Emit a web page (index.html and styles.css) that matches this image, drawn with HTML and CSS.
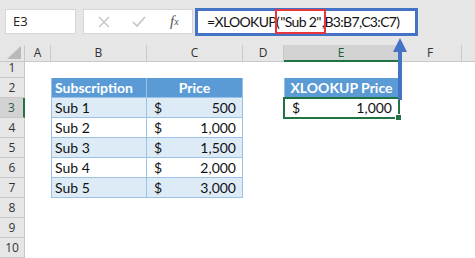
FILE: index.html
```html
<!DOCTYPE html>
<html lang="en">
<head>
    <meta charset="UTF-8">
    <title>XLOOKUP Example</title>
    <link rel="stylesheet" href="styles.css">
</head>
<body>
    <div class="toolbar">
        <div class="name-box">E3</div>
        <div class="fx-buttons">
            <span class="fx-btn">
                <svg width="12" height="12" viewBox="0 0 12 12"><path d="M1 1 L11 11 M11 1 L1 11" stroke="#c4c4c4" stroke-width="1.4" fill="none"/></svg>
            </span>
            <span class="fx-btn">
                <svg width="14" height="12" viewBox="0 0 14 12"><path d="M1 6 L5 10 L13 1" stroke="#c4c4c4" stroke-width="1.6" fill="none"/></svg>
            </span>
            <span class="fx-btn fx-label"><i>f</i><sub>x</sub></span>
        </div>
        <div class="formula-bar">=XLOOKUP(<span class="highlight">"Sub 2"</span>,B3:B7,C3:C7)</div>
    </div>

    <div class="sheet">
        <!-- column headers -->
        <div class="corner"><span class="corner-tri"></span></div>
        <div class="col-hdr">A</div>
        <div class="col-hdr">B</div>
        <div class="col-hdr">C</div>
        <div class="col-hdr">D</div>
        <div class="col-hdr active">E</div>
        <div class="col-hdr">F</div>
        <div class="col-hdr last"></div>

        <!-- row 1 -->
        <div class="row-hdr short">1</div>
        <div class="fill-row"></div>

        <!-- row 2 -->
        <div class="row-hdr">2</div>
        <div></div>
        <div class="cell tbl-head first">Subscription</div>
        <div class="cell tbl-head center">Price</div>
        <div></div>
        <div class="cell tbl-head center first">XLOOKUP Price</div>
        <div class="fill-2"></div>

        <!-- row 3 -->
        <div class="row-hdr active">3</div>
        <div></div>
        <div class="cell band first">Sub 1</div>
        <div class="cell band money"><span>$</span><span>500</span></div>
        <div></div>
        <div class="cell money selected"><span>$</span><span>1,000</span></div>
        <div class="fill-2"></div>

        <!-- row 4 -->
        <div class="row-hdr">4</div>
        <div></div>
        <div class="cell first">Sub 2</div>
        <div class="cell money"><span>$</span><span>1,000</span></div>
        <div class="fill-rest"></div>

        <!-- row 5 -->
        <div class="row-hdr">5</div>
        <div></div>
        <div class="cell band first">Sub 3</div>
        <div class="cell band money"><span>$</span><span>1,500</span></div>
        <div class="fill-rest"></div>

        <!-- row 6 -->
        <div class="row-hdr">6</div>
        <div></div>
        <div class="cell first">Sub 4</div>
        <div class="cell money"><span>$</span><span>2,000</span></div>
        <div class="fill-rest"></div>

        <!-- row 7 -->
        <div class="row-hdr">7</div>
        <div></div>
        <div class="cell band first">Sub 5</div>
        <div class="cell band money"><span>$</span><span>3,000</span></div>
        <div class="fill-rest"></div>

        <div class="row-hdr">8</div>
        <div class="fill-row"></div>
        <div class="row-hdr">9</div>
        <div class="fill-row"></div>
        <div class="row-hdr">10</div>
        <div class="fill-row"></div>
    </div>

    <!-- annotation arrow from E3 up to the formula -->
    <div class="arrow">
        <span class="arrow-head"></span>
        <span class="arrow-shaft"></span>
    </div>
</body>
</html>
```

FILE: styles.css
```css
:root {
    --chrome: #e6e6e6;
    --hdr-line: #c8c8c8;
    --xl-green: #217346;
    --tbl-blue: #5b9bd5;
    --tbl-band: #ddebf7;
    --tbl-line: #9bc2e6;
    --annot-blue: #4472c4;
}

body {
    margin: 0;
    width: 475px;
    height: 258px;
    overflow: hidden;
    font-family: Lato, "Open Sans", sans-serif;
    background-color: #fff;
    position: relative;
}

/* formula bar strip */
.toolbar {
    display: flex;
    align-items: flex-start;
    height: 45px;
    padding-top: 9px;
    padding-left: 5px;
    box-sizing: border-box;
    background-color: var(--chrome);
}
.name-box {
    width: 71px;
    height: 25px;
    box-sizing: border-box;
    background-color: #fff;
    border: 1px solid #d6d6d6;
    font-family: "Open Sans", sans-serif;
    font-size: 13px;
    line-height: 23px;
    padding-left: 7px;
    color: #222;
}
.fx-buttons {
    display: flex;
    align-items: center;
    margin-left: 7px;
    width: 110px;
    height: 25px;
    box-sizing: border-box;
    background-color: #fff;
    border: 1px solid #d6d6d6;
}
.fx-btn {
    display: flex;
    justify-content: center;
    align-items: center;
    width: 36px;
}
.fx-btn:first-child {
    margin-left: 2px;
}
.fx-label {
    font-family: "Liberation Serif", serif;
    color: #555;
    font-size: 15px;
}
.fx-label sub {
    font-size: 10px;
    font-style: italic;
    vertical-align: -1px;
}
.formula-bar {
    margin-left: 2px;
    margin-top: -1px;
    width: 223px;
    height: 28px;
    box-sizing: border-box;
    background-color: #fff;
    border: 3px solid var(--annot-blue);
    font-size: 14px;
    letter-spacing: -0.65px;
    line-height: 21px;
    padding-left: 9px;
    color: #111;
    white-space: nowrap;
}
.highlight {
    outline: 2px solid #e8353b;
    outline-offset: 2px;
    padding: 0 1px;
}

/* worksheet grid */
.sheet {
    display: grid;
    grid-template-columns: 25px 26px 96px 96px 41px 115px 63px 1fr;
    grid-template-rows: 17px 16px repeat(9, 20px);
    font-size: 14px;
}
.corner,
.col-hdr,
.row-hdr {
    background-color: var(--chrome);
    border-right: 1px solid var(--hdr-line);
    border-bottom: 1px solid var(--hdr-line);
    box-sizing: border-box;
    color: #333;
    font-family: "Open Sans", sans-serif;
    font-size: 12px;
    text-align: center;
}
.corner {
    position: relative;
}
.corner-tri {
    position: absolute;
    right: 3px;
    bottom: 2px;
    width: 0;
    height: 0;
    border-left: 14px solid transparent;
    border-bottom: 13px solid #b8b8b8;
}
.col-hdr {
    line-height: 16px;
}
.col-hdr.last {
    border-right: none;
}
.col-hdr.active {
    background-color: #d2d2d2;
    border-bottom: 2px solid var(--xl-green);
    color: #1d5e38;
}
.row-hdr {
    line-height: 19px;
}
.row-hdr.short {
    line-height: 12px;
}
.row-hdr.active {
    background-color: #d2d2d2;
    border-right: 2px solid var(--xl-green);
    color: #2e5e44;
}
.fill-row {
    grid-column: 2 / -1;
}
.fill-2 {
    grid-column: 7 / -1;
}
.fill-rest {
    grid-column: 5 / -1;
}

.cell {
    box-sizing: border-box;
    border-right: 1px solid var(--tbl-line);
    border-bottom: 1px solid var(--tbl-line);
    padding: 0 3px;
    line-height: 19px;
    color: #111;
    white-space: nowrap;
}
.cell.first {
    border-left: 1px solid var(--tbl-line);
}
.cell.center {
    text-align: center;
}
.tbl-head {
    background-color: var(--tbl-blue);
    color: #fff;
    font-weight: bold;
    border-color: var(--tbl-line);
}
.band {
    background-color: var(--tbl-band);
}
.money {
    display: flex;
    justify-content: space-between;
    padding: 0 6px 0 7px;
}
.selected {
    position: relative;
    border: none;
    outline: 2px solid var(--xl-green);
    outline-offset: -1px;
    padding: 0 7px 0 8px;
}
.selected::after {
    content: "";
    position: absolute;
    right: -3px;
    bottom: -3px;
    width: 5px;
    height: 5px;
    background-color: var(--xl-green);
    border: 1px solid #fff;
}

/* annotation arrow */
.arrow {
    position: absolute;
    left: 393px;
    top: 38px;
    width: 14px;
    display: flex;
    flex-direction: column;
    align-items: center;
}
.arrow-head {
    width: 0;
    height: 0;
    border-left: 7px solid transparent;
    border-right: 7px solid transparent;
    border-bottom: 14px solid var(--annot-blue);
}
.arrow-shaft {
    width: 4px;
    height: 48px;
    background-color: var(--annot-blue);
}
```
